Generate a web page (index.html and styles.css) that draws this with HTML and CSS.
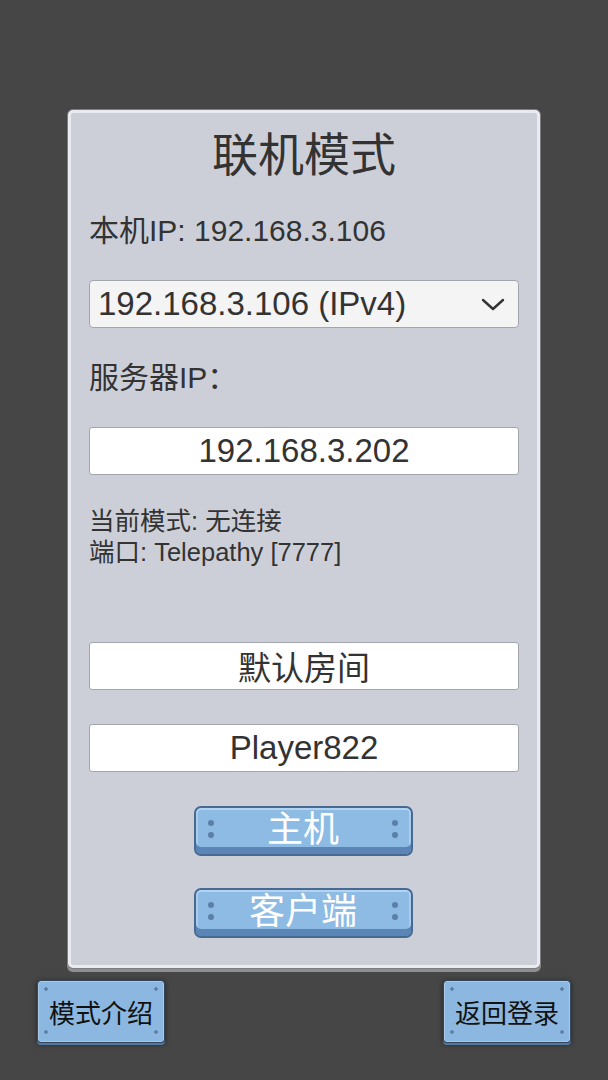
FILE: index.html
```html
<!DOCTYPE html>
<html lang="zh-CN">
<head>
  <meta charset="UTF-8" />
  <meta name="viewport" content="width=device-width, initial-scale=1.0" />
  <title>联机模式</title>
  <link rel="stylesheet" href="styles.css">
</head>
<body>
  <div class="screen">
    <!-- 联机面板 -->
    <div class="panel">
      <h1 class="title">联机模式</h1>
      <div class="label local-ip">本机IP: 192.168.3.106</div>

      <div class="select">
        <span>192.168.3.106 (IPv4)</span>
        <svg class="chevron" width="26" height="16" viewBox="0 0 26 16">
          <path d="M3 3 L13 12 L23 3" fill="none" stroke="#333" stroke-width="2.4" stroke-linecap="round" stroke-linejoin="round"/>
        </svg>
      </div>

      <div class="label server-ip">服务器IP：</div>
      <div class="field server-field">192.168.3.202</div>

      <div class="status">
        <div>当前模式: 无连接</div>
        <div>端口: Telepathy [7777]</div>
      </div>

      <div class="field room-field">默认房间</div>
      <div class="field name-field">Player822</div>

      <button class="btn host-btn">
        <span class="dots left"></span>
        主机
        <span class="dots right"></span>
      </button>
      <button class="btn client-btn">
        <span class="dots left"></span>
        客户端
        <span class="dots right"></span>
      </button>
    </div>

    <!-- 底部按钮 -->
    <div class="footer">
      <button class="small-btn">模式介绍</button>
      <button class="small-btn">返回登录</button>
    </div>
  </div>
</body>
</html>
```

FILE: styles.css
```css
* {
  box-sizing: border-box;
  font-family: "Liberation Sans", "Noto Sans CJK SC", sans-serif;
}
body {
  margin: 0;
  background-color: #464646;
  color: #333;
}
.screen {
  width: 608px;
  height: 1080px;
  padding-top: 110px;
  display: flex;
  flex-direction: column;
  align-items: center;
}
.panel {
  width: 472px;
  height: 858px;
  background: #cdcfd8;
  border: 3px solid #eaebf0;
  border-radius: 5px;
  box-shadow: 0 0 0 1px #7d7d80, 0 3px 0 1px #8e8f93;
  padding: 0 18px;
  display: flex;
  flex-direction: column;
}
.title {
  margin: 0;
  height: 84px;
  line-height: 84px;
  font-size: 46px;
  font-weight: normal;
  text-align: center;
  color: #333;
}
.label {
  height: 40px;
  line-height: 40px;
  font-size: 30px;
  color: #333;
}
.local-ip {
  margin-top: 14px;
}
.select {
  margin-top: 29px;
  height: 48px;
  background: #f4f4f5;
  border: 1px solid #a4a6ae;
  border-radius: 4px;
  display: flex;
  align-items: center;
  justify-content: space-between;
  padding: 0 12px 0 8px;
  font-size: 33px;
  color: #333;
}
.chevron {
  margin-top: 2px;
}
.server-ip {
  margin-top: 30px;
}
.field {
  height: 48px;
  background: #fff;
  border: 1px solid #a4a6ae;
  border-radius: 3px;
  display: flex;
  align-items: center;
  justify-content: center;
  font-size: 33px;
  color: #333;
}
.server-field {
  margin-top: 29px;
}
.status {
  margin-top: 31px;
  font-size: 25.5px;
  line-height: 31px;
  color: #333;
}
.room-field {
  margin-top: 74px;
}
.name-field {
  margin-top: 34px;
}
.btn {
  position: relative;
  align-self: center;
  width: 219px;
  height: 50px;
  margin-top: 34px;
  margin-left: -2px;
  padding: 0 0 3px;
  background: #8dbbe4;
  border: 2px solid #476a93;
  border-radius: 7px;
  box-shadow: inset 0 -7px 0 #5a85b6, inset 0 2px 0 #b3d3f0, inset 2px 0 0 #a9cbec, inset -2px 0 0 #a9cbec;
  color: #fff;
  font-size: 36px;
  line-height: 40px;
}
.client-btn {
  margin-top: 32px;
}
.dots {
  position: absolute;
  top: 12px;
  width: 6px;
  height: 6px;
  border-radius: 50%;
  background: #5d7fa6;
  box-shadow: 0 12px 0 #5d7fa6;
}
.dots.left {
  left: 12px;
}
.dots.right {
  right: 13px;
}
.footer {
  width: 100%;
  margin-top: 13px;
  padding: 0 38px;
  display: flex;
  justify-content: space-between;
}
.small-btn {
  width: 126px;
  height: 61px;
  padding: 0;
  background-color: #8bb7e0;
  background-image:
    radial-gradient(circle, #5d7fa6 1.5px, transparent 2px),
    radial-gradient(circle, #5d7fa6 1.5px, transparent 2px),
    radial-gradient(circle, #5d7fa6 1.5px, transparent 2px),
    radial-gradient(circle, #5d7fa6 1.5px, transparent 2px);
  background-size: 6px 6px;
  background-position: left 4px top 4px, right 4px top 4px, left 4px bottom 6px, right 4px bottom 6px;
  background-repeat: no-repeat;
  border: 1px solid #a8c9ea;
  border-radius: 3px;
  box-shadow: 0 0 0 1px #34465a, 0 2px 0 1px #5377a3, 0 1px 5px 2px rgba(0, 0, 0, 0.35);
  color: #111;
  font-size: 26px;
}
```
